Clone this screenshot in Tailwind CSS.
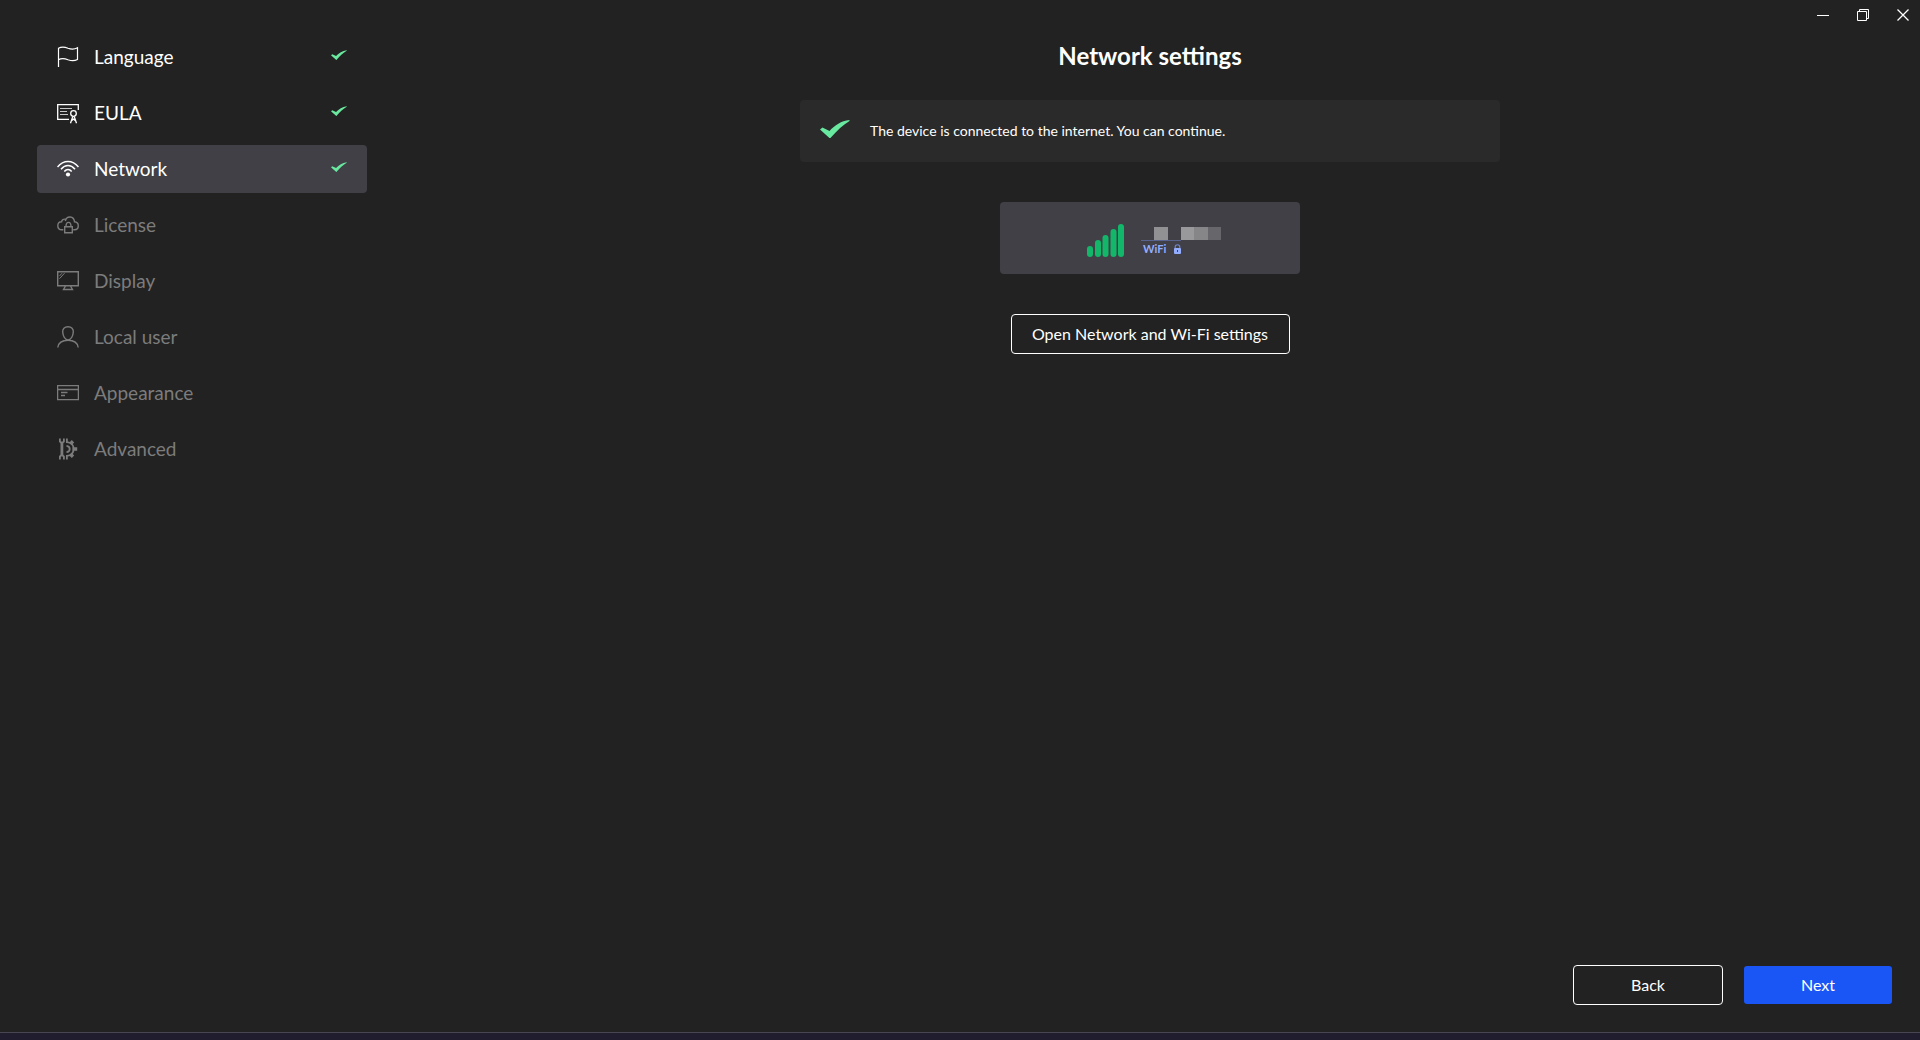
<!DOCTYPE html>
<html lang="en">
<head>
<meta charset="utf-8">
<meta name="viewport" content="width=device-width, initial-scale=1">
<title>Network settings</title>
<script src="https://cdn.jsdelivr.net/npm/@tailwindcss/browser@4"></script>
</head>
<body class="bg-[#201d2e] font-['Lato',sans-serif] text-white">
<svg class="hidden" aria-hidden="true">
  <symbol id="tick" viewBox="0 0 30 18"><path fill="#69e8a0" d="M0 9.500 2.500 7.500 9.500 11C15 5 21 1 29.500 0v1C23 5 17 10.500 10 18.500Z"/></symbol>
</svg>
<div class="flex min-h-screen flex-col pb-[7px]">
<div class="flex grow flex-col border-b border-[#484653] bg-[#222222]">
  <header class="flex h-6 justify-end gap-1.5">
    <button class="flex h-[30px] w-[34px] items-center justify-center" aria-label="Minimize"><svg width="12" height="12" viewBox="0 0 12 12" fill="none" stroke="#fff"><path d="M0 6.500h12"/></svg></button>
    <button class="flex h-[30px] w-[34px] items-center justify-center" aria-label="Restore"><svg width="12" height="12" viewBox="0 0 12 12" fill="none" stroke="#fff"><path d="M.5 2.500h9v9h-9zM2.500 2.500v-2h9v9h-2"/></svg></button>
    <button class="flex h-[30px] w-[34px] items-center justify-center" aria-label="Close"><svg width="12" height="12" viewBox="0 0 12 12" fill="none" stroke="#fff" stroke-width="1.300"><path d="m.5.5 11 11m0-11-11 11"/></svg></button>
  </header>
  <div class="flex grow">
    <nav class="w-[380px] shrink-0 pt-[9px] pr-[13px] pl-[37px]">
      <ul class="flex flex-col gap-2 text-[19px]">
        <li><a href="#language" class="flex h-12 items-center gap-[15px] rounded px-5">
          <svg width="22" height="22" viewBox="0 0 22 22" fill="none" stroke="#fff" stroke-width="1.200"><path d="M1.500 1.800V21M1.500 2.300C4 .8 7 .6 11 2.300c3.500 1.300 6.500 1.200 9.500-.5V13.500c-3 1.500-6 1.500-9.500.2-4-1.600-7-1.500-9.500 0"/></svg>
          <span class="grow">Language</span><svg class="mb-1 h-[10px] w-4"><use href="#tick"/></svg></a></li>
        <li><a href="#eula" class="flex h-12 items-center gap-[15px] rounded px-5">
          <svg width="22" height="22" viewBox="0 0 22 22" fill="none" stroke="#fff" stroke-width="1.300"><path d="M12 17.400H.7V2.700h20.600V8"/><path stroke-width="1" stroke="#c8c8c8" d="M3 6.500h12M3 9.500h7M3 12.500h8"/><circle cx="16.500" cy="11.500" r="2.800"/><path d="m15.800 14.500-2.300 6.800M17.200 14.500l2.300 6.800M14.800 18.500l1.700-1.500 1.700 1.500"/></svg>
          <span class="grow">EULA</span><svg class="mb-1 h-[10px] w-4"><use href="#tick"/></svg></a></li>
        <li><a href="#network" aria-current="step" class="flex h-12 items-center gap-[15px] rounded bg-[#404046] px-5">
          <svg width="22" height="22" viewBox="0 0 22 22" fill="none" stroke="#fff" stroke-width="1.500"><path d="M.5 9c6-7.300 15-7.300 21 0M4 11.200c4.300-5 9.700-5 14 0M7.300 13.500c2.200-2.700 5.200-2.700 7.400 0"/><circle cx="11" cy="16.500" r="2.100" fill="#fff" stroke="none"/></svg>
          <span class="grow">Network</span><svg class="mb-1 h-[10px] w-4"><use href="#tick"/></svg></a></li>
        <li><a href="#license" class="flex h-12 items-center gap-[15px] rounded px-5 text-[#7c7c7c]">
          <svg width="22" height="22" viewBox="0 0 22 22" fill="none" stroke="currentColor" stroke-width="1.400"><path d="M6.300 15.800H4.800C2.300 15.800.8 14 .8 11.800c0-2.400 1.600-4 3.800-4 .3-2 1.800-3 4.200-2.500M8.300 7C9.500 1.500 17 1.500 17.500 7.800c2.300.3 3.800 1.800 3.800 4 0 2.400-1.400 4-3.800 4h-1.300M7.700 12.700h7.600v6H7.700zM9 12.500c0-5.500 5-5.500 5 0"/></svg>
          <span class="grow">License</span></a></li>
        <li><a href="#display" class="flex h-12 items-center gap-[15px] rounded px-5 text-[#7c7c7c]">
          <svg width="22" height="22" viewBox="0 0 22 22" fill="none" stroke="currentColor" stroke-width="1.400"><path d="M.7 1.700h20.600v14H.7zM8.500 16l-2 3.500h9l-2-3.500"/><path stroke-width="1" d="m2.500 6 2.500-2.800M2.500 8.700 7.500 3.200"/></svg>
          <span class="grow">Display</span></a></li>
        <li><a href="#local-user" class="flex h-12 items-center gap-[15px] rounded px-5 text-[#7c7c7c]">
          <svg width="22" height="22" viewBox="0 0 22 22" fill="none" stroke="currentColor" stroke-width="1.400"><path d="M11 .8c3.500 0 5.600 2 5.300 5.200C16 10 14 14 11 14S6 10 5.700 6C5.400 2.800 7.500.8 11 .8zM.8 21.500C1.500 16.500 5 14.300 11 14.300s9.500 2.200 10.200 7.200"/></svg>
          <span class="grow">Local user</span></a></li>
        <li><a href="#appearance" class="flex h-12 items-center gap-[15px] rounded px-5 text-[#7c7c7c]">
          <svg width="22" height="22" viewBox="0 0 22 22" fill="none" stroke="currentColor" stroke-width="1.300"><path d="M.6 3.600h20.800v14H.6zM.6 7.500h20.800M4 10.500h6.500M4 13.500h4"/></svg>
          <span class="grow">Appearance</span></a></li>
        <li><a href="#advanced" class="flex h-12 items-center gap-[15px] rounded px-5 text-[#7c7c7c]">
          <svg width="22" height="22" viewBox="0 0 22 22" fill="none" stroke="currentColor" stroke-width="1.800"><path d="M2.900.5v3l1.900 1.500L6.900 3.500v-3M2.900 21.500v-3l1.900-1.500 2.100 1.500v3"/><path stroke-width="2.800" d="M4.900 4v14"/><path d="M9.900.5v3.700c9 .4 9 13.200 0 13.600v3.700M9.500 7.800c4.300.5 4.300 5.900 0 6.400"/><path stroke-width="3.400" d="m13.300 6 2.700-2.700M15.500 11h4.700M13.300 16l2.700 2.700"/></svg>
          <span class="grow">Advanced</span></a></li>
      </ul>
    </nav>
    <main class="flex grow flex-col items-center px-7 pt-4">
      <h1 class="text-2xl leading-8 font-bold">Network settings</h1>
      <div role="status" class="mt-7 flex h-[62px] w-full max-w-[700px] items-center gap-5 rounded bg-[#2a2a2a] px-5">
        <svg class="mb-1 h-[18px] w-[30px]"><use href="#tick"/></svg>
        <p class="text-sm">The device is connected to the internet. You can continue.</p>
      </div>
      <button class="mt-10 flex h-[72px] w-[300px] items-center justify-center gap-4 rounded bg-[#404046] pt-1 pl-2" aria-label="WiFi network, secured">
        <svg width="38" height="33" viewBox="0 0 38 33" fill="#12b76a"><rect y="22" width="6" height="11" rx="3"/><rect x="8" y="16" width="6" height="17" rx="3"/><rect x="15.500" y="11" width="6" height="22" rx="3"/><rect x="23.500" y="5" width="6" height="28" rx="3"/><rect x="31" width="6" height="33" rx="3"/></svg>
        <span class="flex flex-col pt-1">
          <svg width="80" height="14" viewBox="0 0 80 14" shape-rendering="crispEdges"><path fill="#919194" d="M13 0h14v13H13z"/><path fill="#99999c" d="M40 0h13v13H40z"/><path fill="#868688" d="M53 0h14v13H53z"/><path fill="#66666b" d="M67 0h13v13H67z"/><path fill="#596390" d="M0 13h40v1H0z"/></svg>
          <span class="flex items-center gap-2 pl-0.5 text-[11px] leading-4 font-bold text-[#93adff]">WiFi
            <svg width="7" height="11" viewBox="0 0 7 11"><path fill="none" stroke="#7186c8" stroke-width="1.200" d="M1.200 5V3c0-3 4.600-3 4.600 0v2"/><rect y="4" width="7" height="6" rx="1" fill="#93adff"/><path fill="#404046" d="M3 6h1v2H3z"/></svg>
          </span>
        </span>
      </button>
      <button class="mt-10 h-10 w-[279px] rounded border border-white text-base">Open Network and Wi-Fi settings</button>
    </main>
  </div>
  <footer class="flex items-center justify-end gap-[21px] pr-7 pb-[27px]">
    <button class="h-10 w-[150px] rounded border border-white text-base">Back</button>
    <button class="h-[38px] w-[148px] rounded-[3px] bg-[#1a56f5] text-base">Next</button>
  </footer>
</div>
</div>
</body>
</html>
